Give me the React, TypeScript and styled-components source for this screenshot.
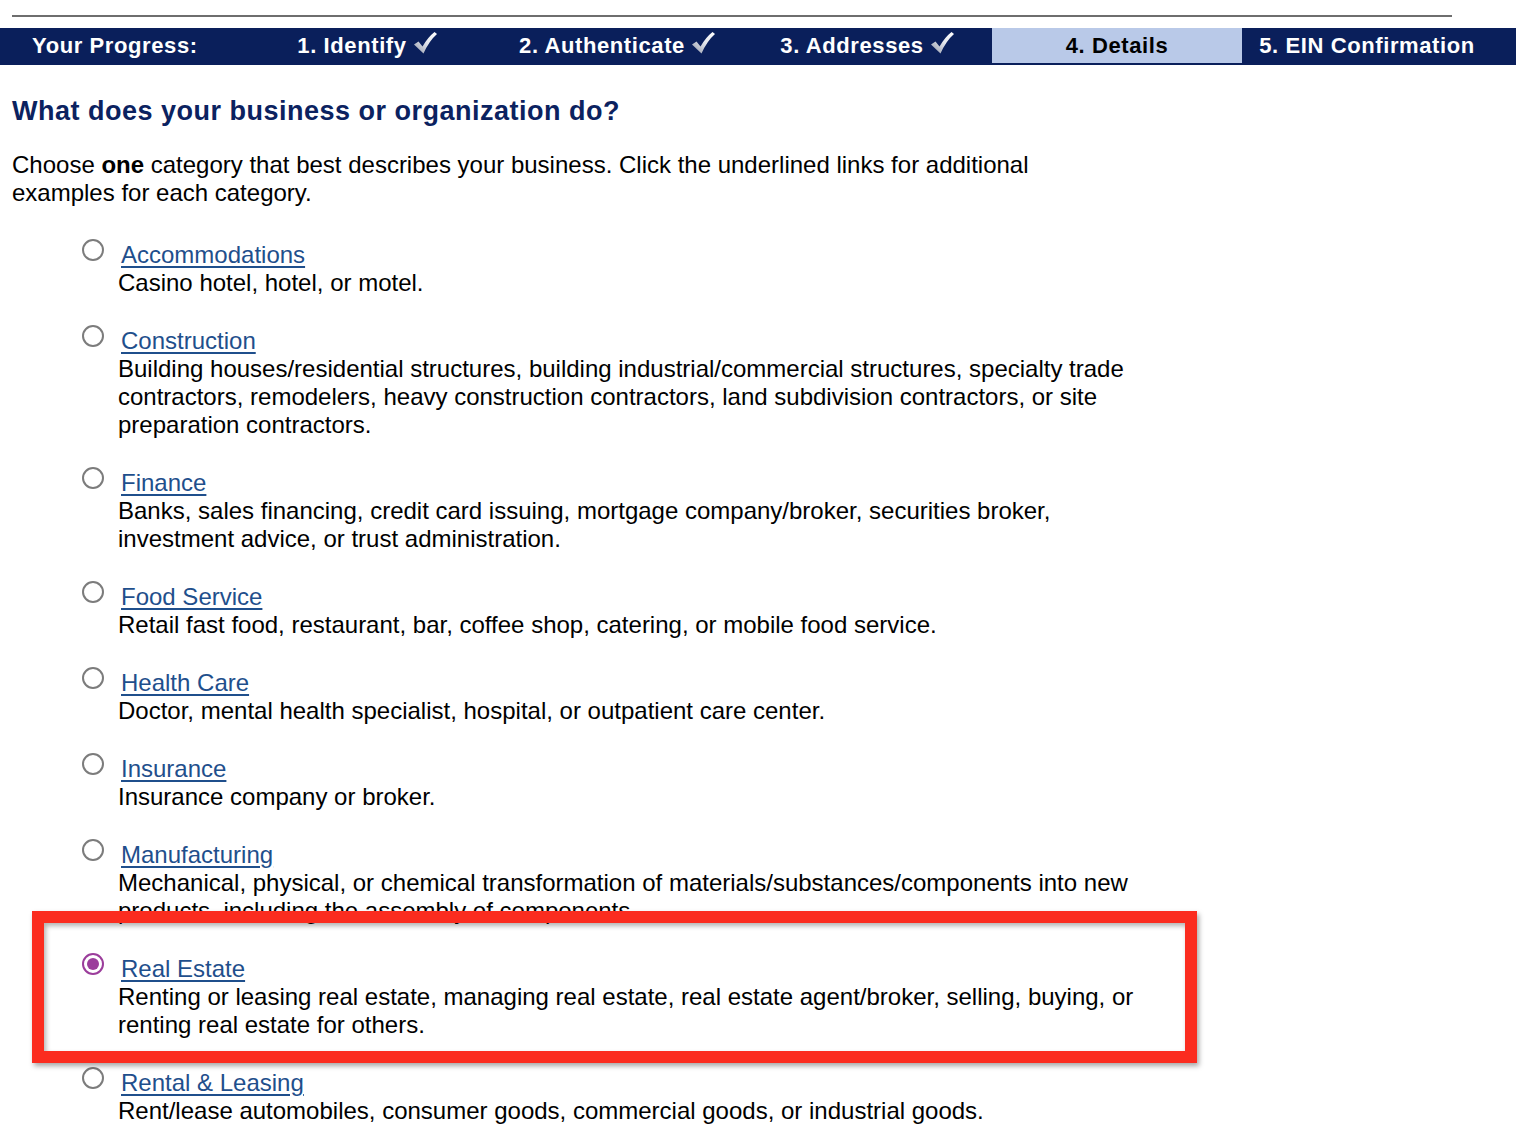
import React from 'react';
import styled, { createGlobalStyle } from 'styled-components';

const Navy = '#0a1f5b';

const GlobalStyle = createGlobalStyle`
  body {
    margin: 0;
    background: #fff;
    font-family: "Liberation Sans", Arial, Helvetica, sans-serif;
    color: #000;
  }
`;

type Category = {
  title: string;
  text: string;
  checked?: boolean;
};

const categories: Category[] = [
  { title: 'Accommodations', text: 'Casino hotel, hotel, or motel.' },
  {
    title: 'Construction',
    text: 'Building houses/residential structures, building industrial/commercial structures, specialty trade contractors, remodelers, heavy construction contractors, land subdivision contractors, or site preparation contractors.',
  },
  {
    title: 'Finance',
    text: 'Banks, sales financing, credit card issuing, mortgage company/broker, securities broker, investment advice, or trust administration.',
  },
  { title: 'Food Service', text: 'Retail fast food, restaurant, bar, coffee shop, catering, or mobile food service.' },
  { title: 'Health Care', text: 'Doctor, mental health specialist, hospital, or outpatient care center.' },
  { title: 'Insurance', text: 'Insurance company or broker.' },
  {
    title: 'Manufacturing',
    text: 'Mechanical, physical, or chemical transformation of materials/substances/components into new products, including the assembly of components.',
  },
  {
    title: 'Real Estate',
    text: 'Renting or leasing real estate, managing real estate, real estate agent/broker, selling, buying, or renting real estate for others.',
    checked: true,
  },
  { title: 'Rental & Leasing', text: 'Rent/lease automobiles, consumer goods, commercial goods, or industrial goods.' },
];

const steps = [
  { label: '1. Identify', done: true },
  { label: '2. Authenticate', done: true },
  { label: '3. Addresses', done: true },
  { label: '4. Details', active: true },
  { label: '5. EIN Confirmation' },
];

const Check = () => (
  <CheckIcon viewBox="0 0 24 24" width={24} height={24}>
    <defs>
      <linearGradient id="chk" x1="0" y1="1" x2="1" y2="0">
        <stop offset="0" stopColor="#8f96a8" />
        <stop offset="0.55" stopColor="#e6e8ee" />
        <stop offset="1" stopColor="#ffffff" />
      </linearGradient>
    </defs>
    <path d="M1 13.5 L5.5 10.5 L9.5 15.5 Q15 6 21.5 1 L24 3 Q16 10 10.5 22.5 Z" fill="url(#chk)" />
  </CheckIcon>
);

export default function App() {
  return (
    <Page>
      <GlobalStyle />
      <TopRule />
      <Progress>
        <Step $lead>Your Progress:</Step>
        {steps.map((s) => (
          <Step key={s.label} $active={s.active}>
            {s.label}
            {s.done && <Check />}
          </Step>
        ))}
      </Progress>

      <Heading>What does your business or organization do?</Heading>
      <Intro>
        Choose <b>one</b> category that best describes your business. Click the underlined links for additional
        examples for each category.
      </Intro>

      <List>
        {categories.map((c) => (
          <Item key={c.title}>
            <Radio $checked={c.checked} />
            <Body>
              <Link href="#">{c.title}</Link>
              <div>{c.text}</div>
            </Body>
          </Item>
        ))}
      </List>

      <Highlight />
    </Page>
  );
}

const Page = styled.div`
  position: relative;
  padding-top: 15px;
  min-height: 1134px;
`;

const TopRule = styled.div`
  margin-left: 12px;
  width: 1440px;
  height: 2px;
  background: #6e6e6e;
`;

const Progress = styled.nav`
  display: flex;
  align-items: flex-start;
  margin-top: 11px;
  height: 37px;
  background: ${Navy};
`;

const Step = styled.div<{ $active?: boolean; $lead?: boolean }>`
  display: flex;
  align-items: center;
  justify-content: ${(p) => (p.$lead ? 'flex-start' : 'center')};
  box-sizing: border-box;
  width: ${(p) => (p.$lead ? '242px' : '250px')};
  padding-left: ${(p) => (p.$lead ? '32px' : '0')};
  padding-top: 1px;
  height: 35px;
  font-size: 22px;
  font-weight: bold;
  letter-spacing: 0.6px;
  white-space: nowrap;
  color: ${(p) => (p.$active ? '#000' : '#fff')};
  background: ${(p) => (p.$active ? '#b9c9e8' : 'transparent')};
`;

const CheckIcon = styled.svg`
  margin-left: 6px;
  margin-top: -6px;
`;

const Heading = styled.h1`
  margin: 30px 12px 0;
  font-size: 27px;
  line-height: 32px;
  letter-spacing: 0.5px;
  font-weight: bold;
  color: #0b2260;
`;

const Intro = styled.p`
  margin: 24px 12px 0;
  max-width: 1100px;
  font-size: 24px;
  line-height: 28px;
`;

const List = styled.div`
  margin-top: 34px;
  padding-left: 82px;
`;

const Item = styled.div`
  display: flex;
  gap: 14px;
  margin-bottom: 30px;
`;

const Radio = styled.span<{ $checked?: boolean }>`
  position: relative;
  flex-shrink: 0;
  box-sizing: border-box;
  width: 22px;
  height: 22px;
  margin-top: -2px;
  border-radius: 50%;
  border: 2px solid ${(p) => (p.$checked ? '#9b3d9b' : '#7c7c7c')};
  background: #fff;

  &::after {
    content: '';
    display: ${(p) => (p.$checked ? 'block' : 'none')};
    position: absolute;
    left: 3px;
    top: 3px;
    width: 12px;
    height: 12px;
    border-radius: 50%;
    background: #9b3d9b;
  }
`;

const Body = styled.div`
  max-width: 1030px;
  font-size: 24px;
  line-height: 28px;
`;

const Link = styled.a`
  margin-left: 3px;
  color: #1f4f8c;
  text-decoration: underline;
  text-underline-offset: 3px;
`;

const Highlight = styled.div`
  position: absolute;
  left: 32px;
  top: 911px;
  width: 1165px;
  height: 152px;
  box-sizing: border-box;
  border: 12px solid #fb2c1f;
  box-shadow: 2px 3px 5px rgba(0, 0, 0, 0.35), inset 2px 3px 5px rgba(0, 0, 0, 0.3);
  pointer-events: none;
`;
